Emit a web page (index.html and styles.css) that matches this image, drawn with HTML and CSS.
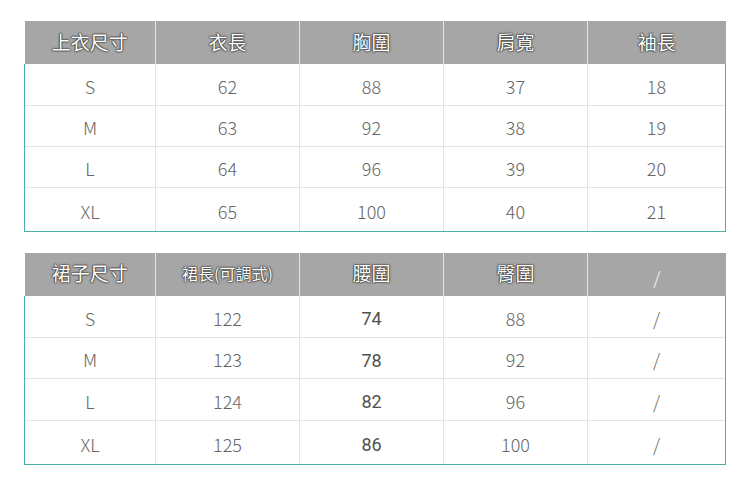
FILE: index.html
```html
<!DOCTYPE html>
<html lang="zh-Hant">
<head>
<meta charset="utf-8">
<link rel="stylesheet" href="styles.css">
</head>
<body>
<div class="page">
  <table class="size">
    <colgroup><col class="c1"><col class="c2"><col class="c3"><col class="c4"><col class="c5"></colgroup>
    <thead>
      <tr><th>上衣尺寸</th><th>衣長</th><th>胸圍</th><th>肩寬</th><th>袖長</th></tr>
    </thead>
    <tbody>
      <tr><td>S</td><td>62</td><td>88</td><td>37</td><td>18</td></tr>
      <tr><td>M</td><td>63</td><td>92</td><td>38</td><td>19</td></tr>
      <tr><td>L</td><td>64</td><td>96</td><td>39</td><td>20</td></tr>
      <tr><td>XL</td><td>65</td><td>100</td><td>40</td><td>21</td></tr>
    </tbody>
  </table>
  <table class="size second">
    <colgroup><col class="c1"><col class="c2"><col class="c3"><col class="c4"><col class="c5"></colgroup>
    <thead>
      <tr><th>裙子尺寸</th><th class="small">裙長(可調式)</th><th>腰圍</th><th>臀圍</th><th class="slash">/</th></tr>
    </thead>
    <tbody>
      <tr><td>S</td><td>122</td><td class="dark">74</td><td>88</td><td>/</td></tr>
      <tr><td>M</td><td>123</td><td class="dark">78</td><td>92</td><td>/</td></tr>
      <tr><td>L</td><td>124</td><td class="dark">82</td><td>96</td><td>/</td></tr>
      <tr><td>XL</td><td>125</td><td class="dark">86</td><td>100</td><td>/</td></tr>
    </tbody>
  </table>
</div>
</body>
</html>
```
FILE: styles.css
```css
html, body {
  margin: 0;
  padding: 0;
  background: #ffffff;
}
.page {
  padding: 21px 0 0 24px;
  display: flex;
  flex-direction: column;
  gap: 21px;
  font-family: "Noto Sans CJK TC", "Noto Sans", sans-serif;
}
.size {
  width: 701px;
  border-collapse: collapse;
  table-layout: fixed;
}
.c1 { width: 131px; }
.c2 { width: 144px; }
.c3 { width: 144px; }
.c4 { width: 144px; }
.c5 { width: 138px; }
.size thead tr { height: 43px; }
.size th {
  padding: 0 0 2px 0;
  background: #a6a6a6;
  color: #ffffff;
  font-size: 19px;
  font-weight: 400;
  border-left: 1px solid #e6e6e6;
  text-shadow: 0 0 1px #333, 0 0 1px #333, 0 0 2px #444, 0 0 2px #444;
  line-height: 20px;
  vertical-align: middle;
}
.size th:first-child { border-left: none; }
.size th.small { font-size: 16px; }
.size th.slash {
  font-size: 18px;
  font-weight: 300;
  text-shadow: none;
  padding: 6px 0 0 0;
}
.size tbody tr { height: 41px; }
.size.second tbody tr { height: 41.5px; }
.size td {
  padding: 3px 0 0 0;
  text-align: center;
  color: #666666;
  font-size: 18px;
  font-weight: 300;
  border-left: 1px solid #e3e3e3;
  border-top: 1px solid #e3e3e3;
  vertical-align: middle;
  line-height: 20px;
}
.size tbody tr:first-child td { border-top: none; }
.size td:first-child { border-left: 1.5px solid #4aaea9; }
.size td:last-child { border-right: 1.5px solid #4aaea9; }
.size tbody tr:last-child { height: 44px; }
.size tbody tr:last-child td { border-bottom: 1.5px solid #4aaea9; }
.size td.dark {
  color: #505050;
  font-family: Roboto, "Noto Sans", sans-serif;
  font-weight: 400;
  font-size: 18px;
  padding-top: 6px;
}
```
